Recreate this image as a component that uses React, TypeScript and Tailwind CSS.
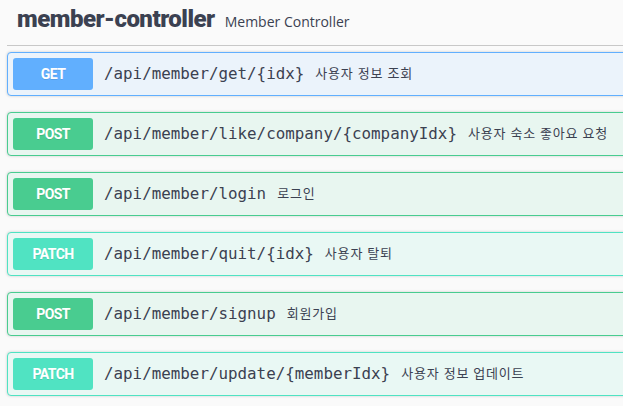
import React from "react";

type Method = "GET" | "POST" | "PATCH";

const methodStyles: Record<Method, { block: string; badge: string }> = {
  GET: {
    block: "border-[#61affe] bg-[#ebf3fb]",
    badge: "bg-[#61affe]",
  },
  POST: {
    block: "border-[#49cc90] bg-[#e8f6f0]",
    badge: "bg-[#49cc90]",
  },
  PATCH: {
    block: "border-[#50e3c2] bg-[#e9f8f4]",
    badge: "bg-[#50e3c2]",
  },
};

const operations: { method: Method; path: string; summary: string }[] = [
  { method: "GET", path: "/api/member/get/{idx}", summary: "사용자 정보 조회" },
  { method: "POST", path: "/api/member/like/company/{companyIdx}", summary: "사용자 숙소 좋아요 요청" },
  { method: "POST", path: "/api/member/login", summary: "로그인" },
  { method: "PATCH", path: "/api/member/quit/{idx}", summary: "사용자 탈퇴" },
  { method: "POST", path: "/api/member/signup", summary: "회원가입" },
  { method: "PATCH", path: "/api/member/update/{memberIdx}", summary: "사용자 정보 업데이트" },
];

const sans = "font-['Open_Sans','Noto_Sans_CJK_KR',sans-serif]";
const narrow = "font-['Roboto','Noto_Sans',sans-serif]";
const mono = "font-['DejaVu_Sans_Mono','Liberation_Mono',monospace]";

function Operation({ method, path, summary }: { method: Method; path: string; summary: string }) {
  const s = methodStyles[method];
  return (
    <div
      className={`flex items-center h-[44px] border rounded-[4px] px-[5px] mb-[16px] shadow-[0_0_3px_rgba(0,0,0,0.19)] ${s.block}`}
    >
      <div
        className={`w-[80px] h-[32px] shrink-0 rounded-[3px] flex items-center justify-center text-white font-bold text-[14px] tracking-[-0.6px] [text-shadow:0_1px_0_rgba(0,0,0,0.1)] ${narrow} ${s.badge}`}
      >
        {method}
      </div>
      <span className={`pl-[11px] text-[15.85px] text-[#3b4151] whitespace-nowrap ${mono}`}>{path}</span>
      <span className={`pl-[11px] text-[13px] tracking-[0.8px] text-[#3b4151] whitespace-nowrap ${sans}`}>{summary}</span>
    </div>
  );
}

export default function App() {
  return (
    <div className={`w-[623px] h-[406px] overflow-hidden bg-[#fafafa] ${sans}`}>
      <div className="w-[680px] pl-[7px]">
        <h4 className="flex items-baseline h-[46px] pt-[4px] pl-[10px] border-b border-[#c8c8c8] text-[#3b4151]">
          <span className={`text-[24px] leading-[30px] font-black tracking-[-0.5px] ${narrow}`}>member-controller</span>
          <span className="ml-[10px] text-[14px] font-normal">Member Controller</span>
        </h4>
        <div className="pt-[6px]">
          {operations.map((op) => (
            <Operation key={op.path} {...op} />
          ))}
        </div>
      </div>
    </div>
  );
}
